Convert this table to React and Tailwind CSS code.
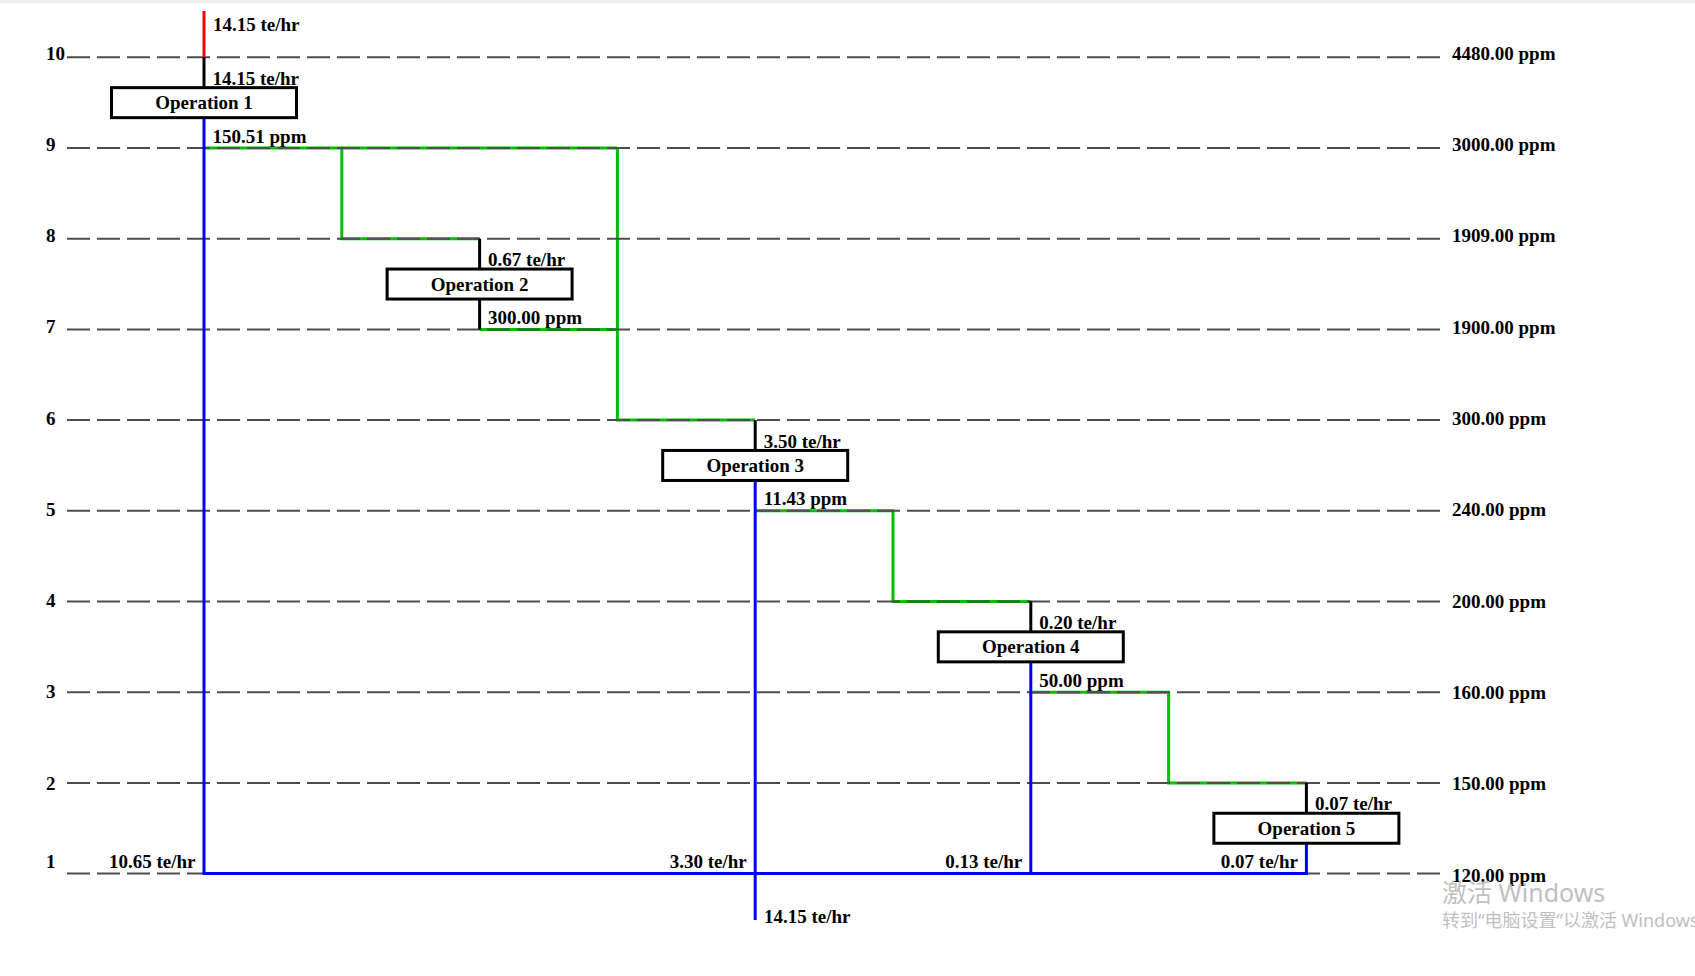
import React from "react";

// level lines (10 at top, 1 at bottom) and operation columns
const LY = (n) => 57.3 + (10 - n) * 90.7;
const CX = (k) => 204 + k * 137.8;

const rightLabels = {
  10: "4480.00 ppm",
  9: "3000.00 ppm",
  8: "1909.00 ppm",
  7: "1900.00 ppm",
  6: "300.00 ppm",
  5: "240.00 ppm",
  4: "200.00 ppm",
  3: "160.00 ppm",
  2: "150.00 ppm",
  1: "120.00 ppm",
};

const ops = [
  { name: "Operation 1", inlet: "14.15 te/hr", outlet: "150.51 ppm", out: "blue", end: LY(1) },
  { name: "Operation 2", inlet: "0.67 te/hr", outlet: "300.00 ppm", out: "black", end: LY(7) },
  { name: "Operation 3", inlet: "3.50 te/hr", outlet: "11.43 ppm", out: "blue", end: 920 },
  { name: "Operation 4", inlet: "0.20 te/hr", outlet: "50.00 ppm", out: "blue", end: LY(1) },
  { name: "Operation 5", inlet: "0.07 te/hr", outlet: null, out: "blue", end: LY(1) },
];

const bottomFlows = [
  { k: 0, text: "10.65 te/hr" },
  { k: 4, text: "3.30 te/hr" },
  { k: 6, text: "0.13 te/hr" },
  { k: 8, text: "0.07 te/hr" },
];

const greenPaths = [
  `M${CX(0)} ${LY(9)} H${CX(3)}`,
  `M${CX(1)} ${LY(9)} V${LY(8)} H${CX(2)}`,
  `M${CX(2)} ${LY(7)} H${CX(3)}`,
  `M${CX(3)} ${LY(9)} V${LY(6)} H${CX(4)}`,
  `M${CX(4)} ${LY(5)} H${CX(5)} V${LY(4)} H${CX(6)}`,
  `M${CX(6)} ${LY(3)} H${CX(7)} V${LY(2)} H${CX(8)}`,
];

const levels = [10, 9, 8, 7, 6, 5, 4, 3, 2, 1];

const App = () => {
  return (
    <div className="relative w-[1695px] h-[976px] overflow-hidden bg-white">
      <div className="h-[3px] bg-[#ededed]" />
      <svg width="1695" height="973" viewBox="0 3 1695 973" className="block">
        {/* green water lines, under the grid */}
        <g fill="none" stroke="#00c000" strokeWidth="3">
          {greenPaths.map((d, i) => (
            <path key={i} d={d} />
          ))}
        </g>

        {/* dashed level lines */}
        <g stroke="#4d4d4d" strokeWidth="2" strokeDasharray="23 7">
          {levels.map((n) => (
            <line key={n} x1="67" y1={LY(n)} x2="1440" y2={LY(n)} />
          ))}
        </g>

        {/* fresh water in */}
        <line x1={CX(0)} y1="11" x2={CX(0)} y2={LY(10)} stroke="#ff0000" strokeWidth="3" />

        {/* operation streams */}
        {ops.map((op, i) => {
          const k = i * 2;
          const top = LY(10 - k);
          const mid = (LY(10 - k) + LY(9 - k)) / 2;
          return (
            <g key={op.name}>
              <line x1={CX(k)} y1={top} x2={CX(k)} y2={mid - 15} stroke="#000" strokeWidth="3" />
              <line
                x1={CX(k)}
                y1={mid + 15}
                x2={CX(k)}
                y2={op.end}
                stroke={op.out === "blue" ? "#0000ff" : "#000"}
                strokeWidth="3"
              />
            </g>
          );
        })}

        {/* waste water header */}
        <line x1={CX(0) - 1.5} y1={LY(1)} x2={CX(8) + 1.5} y2={LY(1)} stroke="#0000ff" strokeWidth="3" />

        {/* boxes */}
        {ops.map((op, i) => {
          const k = i * 2;
          const mid = (LY(10 - k) + LY(9 - k)) / 2;
          return (
            <rect
              key={op.name}
              x={CX(k) - 92.5}
              y={mid - 15}
              width="185"
              height="30"
              fill="#fff"
              stroke="#000"
              strokeWidth="3"
            />
          );
        })}

        <g className="font-['Liberation_Serif',serif] font-bold text-[19px]" fill="#000">
          {/* left level numbers */}
          {levels.map((n) => (
            <text key={n} x="46" y={n === 1 ? 867.5 : 59.5 + (10 - n) * 91.25}>
              {n}
            </text>
          ))}

          {/* right concentrations */}
          {levels.map((n) => (
            <text key={n} x="1452" y={59.8 + (10 - n) * 91.3}>
              {rightLabels[n]}
            </text>
          ))}

          <text x="213" y="30.5">14.15 te/hr</text>
          <text x="764" y="922.5">14.15 te/hr</text>

          {ops.map((op, i) => {
            const k = i * 2;
            return (
              <g key={op.name}>
                <text x={CX(k)} y={(LY(10 - k) + LY(9 - k)) / 2 + 6.5} textAnchor="middle">
                  {op.name}
                </text>
                <text x={CX(k) + 8.5} y={LY(10 - k) + 27.5}>
                  {op.inlet}
                </text>
                {op.outlet && (
                  <text x={CX(k) + 8.5} y={LY(9 - k) - 5.5}>
                    {op.outlet}
                  </text>
                )}
              </g>
            );
          })}

          {bottomFlows.map((f) => (
            <text key={f.k} x={CX(f.k) - 8.5} y="867.5" textAnchor="end">
              {f.text}
            </text>
          ))}
        </g>
      </svg>

      {/* activation watermark */}
      <div className="absolute left-[1442px] top-[880px] whitespace-nowrap text-[#bfbfbf] font-['Noto_Sans','Noto_Sans_CJK_SC',sans-serif]">
        <div className="text-[25px] leading-[25px]">激活 Windows</div>
        <div className="mt-[5px] text-[18px] leading-[21px]">转到“电脑设置”以激活 Windows。</div>
      </div>
    </div>
  );
};

export default App;
